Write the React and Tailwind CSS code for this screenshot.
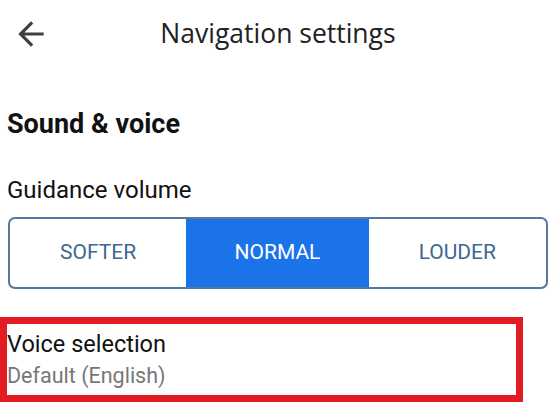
import React from 'react';

const options = ['SOFTER', 'NORMAL', 'LOUDER'];

function BackArrow() {
    return (
        <svg viewBox="0 0 24 24" className="w-[38px] h-[38px] fill-[#3c4043]">
            <path d="M20 11H7.83l5.59-5.59L12 4l-8 8 8 8 1.41-1.41L7.83 13H20v-2z" />
        </svg>
    );
}

export default function App() {
    const selected = 'NORMAL';

    return (
        <div className="w-[556px] h-[419px] bg-white overflow-hidden font-['Roboto',sans-serif] text-[#202124]">

            {/* Header */}
            <div className="grid grid-cols-[1fr_auto_1fr] items-center h-[68px]">
                <div className="pl-[12px] flex items-center">
                    <BackArrow />
                </div>
                <h1 className="mb-[1px] font-['Open_Sans',sans-serif] text-[26.5px] text-[#202124]">Navigation settings</h1>
                <div />
            </div>

            {/* Sound & voice */}
            <div className="px-2 pt-[40px]">
                <h2 className="-ml-px text-[27px] leading-[32px] font-bold text-[#111]">Sound &amp; voice</h2>
                <p className="-ml-px mt-[36px] text-[24px] leading-[28px] text-[#111]">Guidance volume</p>

                <div className="mt-[13px] grid grid-cols-[178fr_184fr_179fr] h-[72px] border-2 border-[#56789a] rounded-[7px] overflow-hidden">
                    {options.map((opt) => (
                        <div
                            key={opt}
                            className={opt === selected
                                ? 'flex items-center justify-center bg-[#1a73e8] text-white text-[21px]'
                                : 'flex items-center justify-center text-[#3d6891] text-[21px]'}
                        >
                            {opt}
                        </div>
                    ))}
                </div>
            </div>

            {/* Voice selection (highlighted) */}
            <div className="mt-[28px] w-[523px] border-[7px] border-[#e31b23] pt-[6px] pb-[6px]">
                <p className="text-[23.5px] leading-[28px] text-[#111]">Voice selection</p>
                <p className="mt-[5px] text-[21.5px] leading-[26px] text-[#777]">Default (English)</p>
            </div>
        </div>
    );
}
